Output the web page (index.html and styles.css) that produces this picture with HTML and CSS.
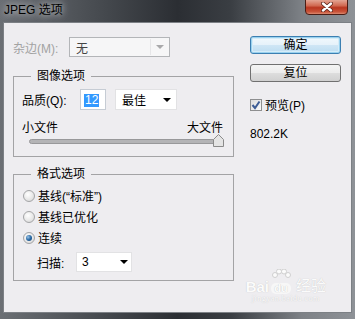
FILE: index.html
```html
<!DOCTYPE html>
<html lang="zh-CN">
<head>
    <meta charset="UTF-8">
    <title>JPEG 选项</title>
    <link rel="stylesheet" href="styles.css">
</head>
<body>
<div class="window">
    <div class="titlebar">
        <span class="title">JPEG 选项</span>
        <button class="close-btn">
            <svg width="12" height="10" viewBox="0 0 12 10">
                <path d="M2 1.5L10 8.5M10 1.5L2 8.5" stroke="#5a2218" stroke-width="4" stroke-linecap="round"/>
                <path d="M2 1.5L10 8.5M10 1.5L2 8.5" stroke="#fff" stroke-width="2.4" stroke-linecap="round"/>
            </svg>
        </button>
    </div>

    <div class="content">
        <div class="left-col">
            <div class="matte-row">
                <span class="matte-label">杂边(M):</span>
                <div class="select select-disabled">
                    <span>无</span>
                    <span class="sep"></span>
                    <span class="arrow"></span>
                </div>
            </div>

            <fieldset class="group image-group">
                <legend>图像选项</legend>
                <div class="group-body">
                    <div class="quality-row">
                        <span class="quality-label">品质(Q):</span>
                        <div class="num-input"><span class="selected">12</span></div>
                        <div class="select quality-select">
                            <span>最佳</span>
                            <span class="arrow"></span>
                        </div>
                    </div>
                    <div class="size-labels">
                        <span>小文件</span>
                        <span>大文件</span>
                    </div>
                    <div class="slider">
                        <div class="track"></div>
                        <svg class="thumb" width="11" height="13" viewBox="0 0 11 13">
                            <path d="M0.5 12.5V5.5L5.5 0.5L10.5 5.5V12.5Z" fill="#e4e4e4" stroke="#8a8a8a"/>
                        </svg>
                    </div>
                </div>
            </fieldset>

            <fieldset class="group format-group">
                <legend>格式选项</legend>
                <div class="group-body">
                    <div class="radio-row"><span class="radio"></span>基线(“标准”)</div>
                    <div class="radio-row"><span class="radio"></span>基线已优化</div>
                    <div class="radio-row"><span class="radio checked"></span>连续</div>
                    <div class="scan-row">
                        <span class="scan-label">扫描:</span>
                        <div class="select scan-select">
                            <span>3</span>
                            <span class="arrow"></span>
                        </div>
                    </div>
                </div>
            </fieldset>
        </div>

        <div class="right-col">
            <button class="btn btn-default">确定</button>
            <button class="btn">复位</button>
            <div class="check-row">
                <span class="checkbox">
                    <svg width="10" height="10" viewBox="0 0 10 10">
                        <path d="M1.5 5L4 8L8.5 1.5" fill="none" stroke="#3d5d95" stroke-width="2"/>
                    </svg>
                </span>
                预览(P)
            </div>
            <div class="filesize">802.2K</div>
        </div>

        <div class="watermark">
            <div class="wm-logo">
                <span class="wm-bai">Bai</span>
                <span class="wm-paw">
                    <svg width="22" height="14" viewBox="0 0 22 14">
                        <circle cx="5" cy="6" r="2.5" fill="#fbfbfb" stroke="#d0d0d0"/>
                        <circle cx="9" cy="2.5" r="2.5" fill="#fbfbfb" stroke="#d0d0d0"/>
                        <circle cx="14" cy="2.5" r="2.5" fill="#fbfbfb" stroke="#d0d0d0"/>
                        <circle cx="18" cy="6" r="2.5" fill="#fbfbfb" stroke="#d0d0d0"/>
                    </svg>
                    <span class="wm-du">du</span>
                </span>
                <span class="wm-jy">经验</span>
            </div>
            <div class="wm-url">jingyan.baidu.com</div>
        </div>
    </div>
</div>
</body>
</html>
```

FILE: styles.css
```css
* {
    box-sizing: border-box;
}

body {
    margin: 0;
    font-family: "Liberation Sans", "Noto Sans CJK SC", sans-serif;
    font-size: 12px;
    color: #000;
    background: #2f3237;
}

.window {
    width: 355px;
    height: 319px;
    display: flex;
    flex-direction: column;
    padding: 0 3px 6px;
    background: linear-gradient(90deg, #6b6f74 0%, #44484d 30%, #2b2e33 50%, #3a3e43 65%, #7d8186 85%, #8e9297 100%);
}

.titlebar {
    height: 22px;
    display: flex;
    justify-content: space-between;
    align-items: flex-start;
}

.title {
    margin: 3px 0 0 1px;
    line-height: 14px;
    color: #000;
    text-shadow: 0 0 6px #c9cbcd, 0 0 10px #a7aaad;
}

.close-btn {
    width: 43px;
    height: 16px;
    margin: -1px 4px 0 0;
    padding: 0;
    border: 1px solid #4a1d15;
    border-radius: 0 0 4px 4px;
    background: linear-gradient(#e3a593 0%, #d16a52 40%, #b9361f 55%, #c9553b 85%, #dd8a70 100%);
    display: flex;
    align-items: center;
    justify-content: center;
}

.content {
    flex: 1;
    position: relative;
    display: flex;
    padding: 12px 10px 0 9px;
    background: #eeedf0;
    border: 1px solid #7c8085;
}

/* left side */

.left-col {
    width: 221px;
    margin-top: 2px;
}

.matte-row {
    height: 20px;
    display: flex;
    align-items: center;
}

.matte-label {
    width: 56px;
    color: #a2a2a2;
}

.select {
    height: 21px;
    display: flex;
    align-items: center;
    background: #fff;
    border: 1px solid #e2e2e4;
}

.select span:first-child {
    flex: 1;
}

.arrow {
    width: 0;
    height: 0;
    border-left: 4px solid transparent;
    border-right: 4px solid transparent;
    border-top: 4px solid #000;
}

.select-disabled {
    width: 101px;
    height: 20px;
    padding: 0 5px 0 6px;
    background: #f6f6f7;
    border-color: #b3b5b8;
    color: #444;
}

.select-disabled .sep {
    width: 1px;
    height: 16px;
    margin-right: 5px;
    background: #e6e6e8;
}

.select-disabled .arrow {
    border-top-color: #a9a9ab;
}

.group {
    margin: 0;
    padding: 0;
    border: 1px solid #a3a3a5;
}

.group legend {
    margin-left: 17px;
    padding: 0 6px;
    line-height: 14px;
}

.image-group {
    margin-top: 12px;
}

.image-group .group-body {
    padding: 6px 10px 9px 8px;
}

.quality-row {
    height: 21px;
    display: flex;
    align-items: center;
}

.quality-label {
    width: 58px;
}

.num-input {
    width: 26px;
    height: 21px;
    padding: 3px 0 0 3px;
    background: #fff;
    border: 1px solid #c6ccd4;
}

.selected {
    display: inline-block;
    padding: 0 1px;
    line-height: 13px;
    background: #3399ff;
    color: #fff;
}

.quality-select {
    width: 62px;
    margin-left: 9px;
    padding: 0 5px 0 6px;
}

.size-labels {
    margin-top: 11px;
    line-height: 14px;
    display: flex;
    justify-content: space-between;
}

.slider {
    position: relative;
    height: 12px;
    margin-left: 7px;
    display: flex;
    align-items: center;
}

.track {
    flex: 1;
    height: 5px;
    border-radius: 3px;
    background: #b4b4b6;
    border: 1px solid #98989a;
}

.thumb {
    position: absolute;
    right: -1px;
    top: -1px;
}

.format-group {
    margin-top: 10px;
}

.format-group .group-body {
    padding: 4px 10px 8px 9px;
}

.radio-row {
    height: 21px;
    display: flex;
    align-items: center;
}

.radio {
    width: 12px;
    height: 12px;
    margin-right: 3px;
    border-radius: 50%;
    border: 1px solid #a4a5a7;
    background: radial-gradient(circle at 40% 35%, #ffffff 0%, #e6e6e6 60%, #cfcfcf 100%);
    display: flex;
    align-items: center;
    justify-content: center;
}

.radio.checked::after {
    content: "";
    width: 6px;
    height: 6px;
    border-radius: 50%;
    background: radial-gradient(circle at 35% 35%, #9cc4e6 0%, #2a6aa6 50%, #143e6c 100%);
}

.scan-row {
    height: 20px;
    margin-top: 4px;
    display: flex;
    align-items: center;
}

.scan-label {
    width: 39px;
    margin-left: 14px;
}

.scan-select {
    width: 56px;
    height: 20px;
    padding: 0 3px 0 5px;
}

/* right side */

.right-col {
    width: 91px;
    margin-left: auto;
    padding-top: 1px;
    display: flex;
    flex-direction: column;
}

.btn {
    height: 18px;
    padding: 0;
    font-family: inherit;
    font-size: 12px;
    line-height: 14px;
    color: #000;
    border: 1px solid #707070;
    border-radius: 3px;
    background: linear-gradient(#f4f4f4 0%, #ececec 48%, #dddddd 52%, #d0d0d0 100%);
}

.btn + .btn {
    margin-top: 10px;
}

.btn-default {
    border-color: #3c7fb1;
    box-shadow: inset 0 0 0 1px #9ad2ef, inset 0 0 0 2px #d5ecf8;
    background: linear-gradient(#f2f9fd 0%, #e6f2fa 48%, #cfe6f5 52%, #bcddf1 100%);
}

.check-row {
    height: 13px;
    margin-top: 16px;
    display: flex;
    align-items: center;
}

.checkbox {
    width: 12px;
    height: 12px;
    margin-right: 3px;
    border: 1px solid #8e8f90;
    background: linear-gradient(135deg, #dcdcdc, #fafafa);
    display: flex;
    align-items: center;
    justify-content: center;
}

.filesize {
    margin-top: 16px;
    line-height: 14px;
}

/* watermark overlay */

.watermark {
    position: absolute;
    right: 25px;
    bottom: 8px;
    display: flex;
    flex-direction: column;
    align-items: center;
    color: #fbfbfb;
    text-shadow: 0 0 1px #bdbdbd;
}

.wm-logo {
    display: flex;
    align-items: flex-end;
}

.wm-bai,
.wm-du {
    font-weight: bold;
    font-size: 15px;
    line-height: 15px;
}

.wm-paw {
    display: flex;
    flex-direction: column;
    align-items: center;
    margin: 0 4px 0 1px;
}

.wm-du {
    font-size: 11px;
    line-height: 11px;
    padding: 0 3px;
    border-radius: 5px;
    background: #f7f7f7;
}

.wm-jy {
    font-size: 15px;
    line-height: 16px;
}

.wm-url {
    font-size: 8px;
    line-height: 10px;
    letter-spacing: 0.5px;
    font-family: "Liberation Serif", serif;
}
```
